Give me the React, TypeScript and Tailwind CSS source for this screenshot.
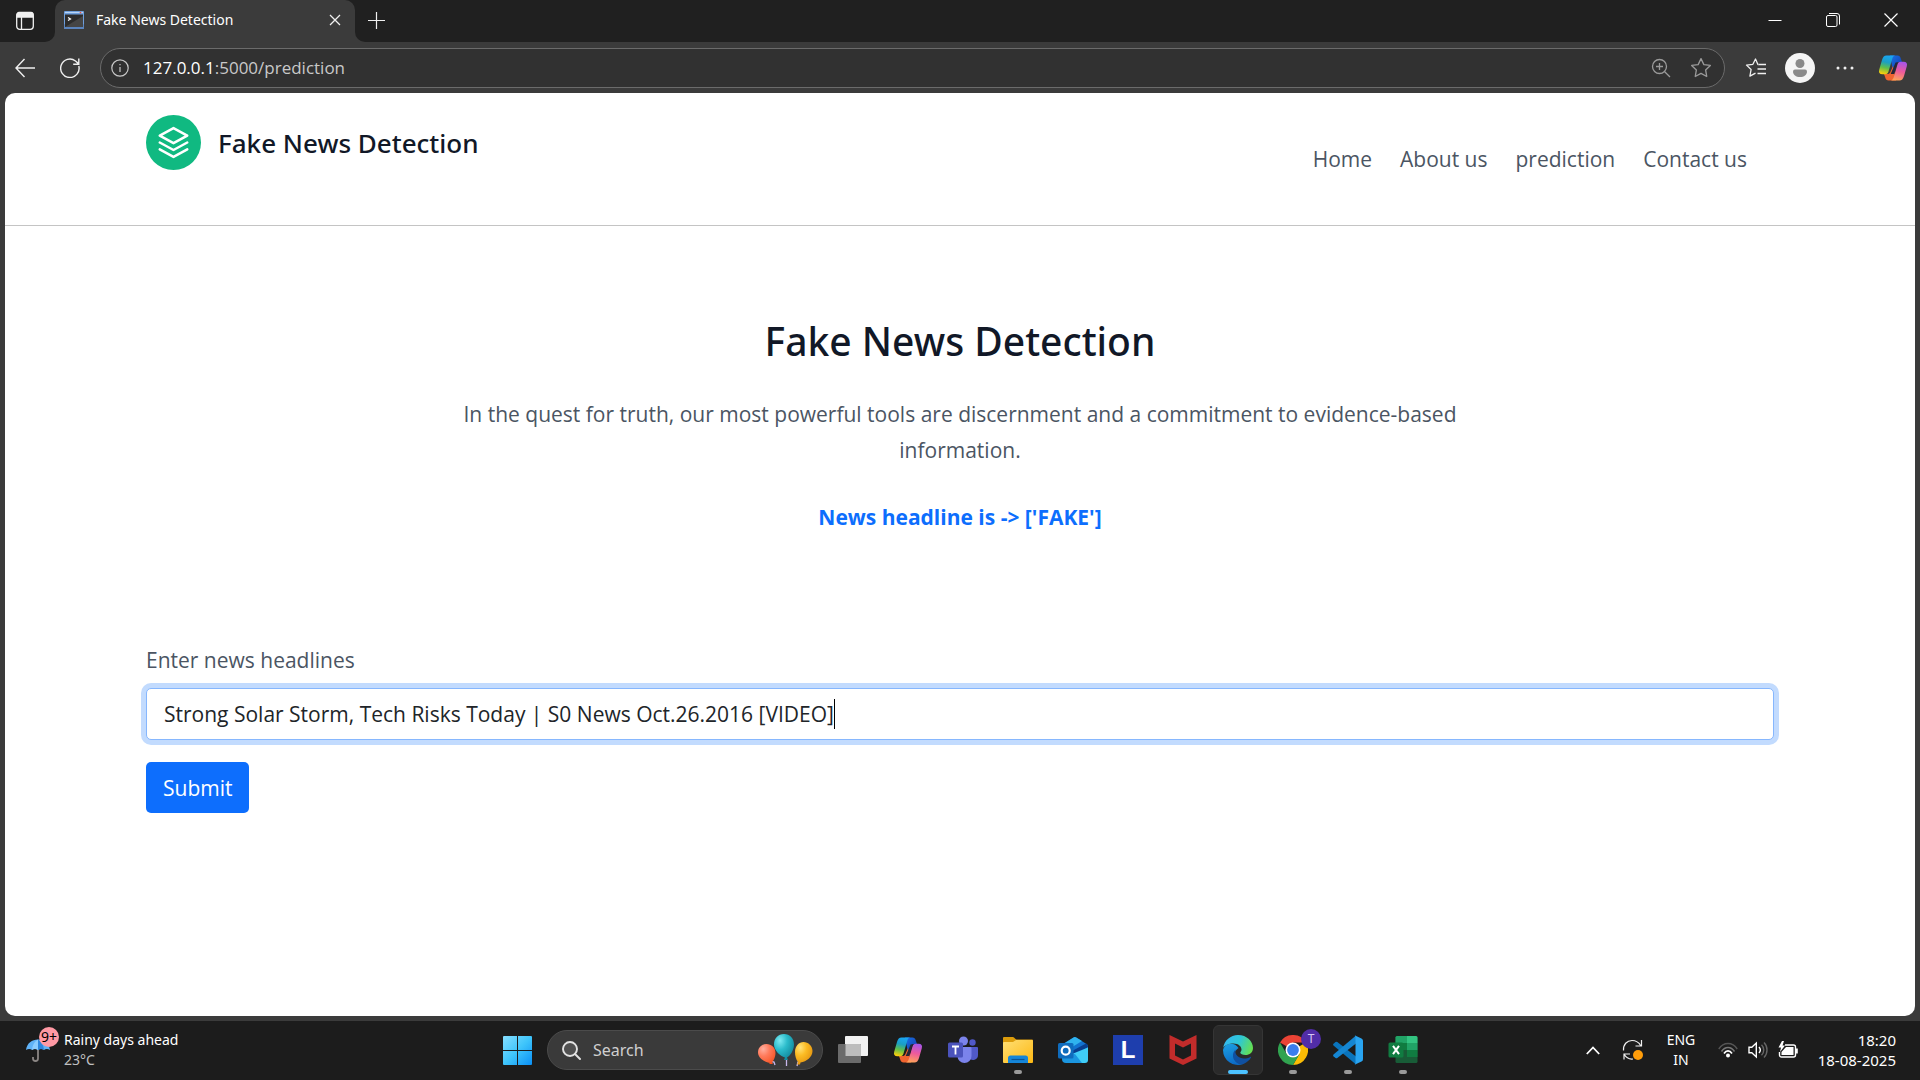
import type { ReactNode } from "react";

function CopilotIcon({ size }: { size: number }) {
  return (
    <svg width={size} height={size} viewBox="0 0 30 30" aria-hidden="true">
      <defs>
        <linearGradient id="cpLeft" x1="0.5" y1="0" x2="0.3" y2="1">
          <stop offset="0" stopColor="#1aa5f2" />
          <stop offset="0.35" stopColor="#1b9fc4" />
          <stop offset="0.65" stopColor="#5fbf4b" />
          <stop offset="1" stopColor="#ffce0a" />
        </linearGradient>
        <linearGradient id="cpRight" x1="0.6" y1="0" x2="0.4" y2="1">
          <stop offset="0" stopColor="#a855e8" />
          <stop offset="0.5" stopColor="#ee5a9c" />
          <stop offset="1" stopColor="#ffa25a" />
        </linearGradient>
        <linearGradient id="cpTop" x1="0" y1="0" x2="1" y2="1">
          <stop offset="0" stopColor="#1a73e8" />
          <stop offset="1" stopColor="#1238a8" />
        </linearGradient>
      </defs>
      <path d="M12 2.500h7.500c1.800 0 2.600 1 3.200 2.800L24 9h-3c-2 0-3 .8-3.600 2.600L15 17z" fill="url(#cpTop)" />
      <path d="M18 27.500h-7.500c-1.800 0-2.600-1-3.200-2.800L6 21h3c2 0 3-.8 3.600-2.600L15 13z" fill="#f0642f" />
      <path d="M8.500 2.500H17c-1.500.3-2.200 1.500-2.800 3.400L10.500 18.500c-.6 1.800-1.300 2.700-3.200 2.700H4.500C1.500 21.200.4 19.500 1.200 16.700L4 7C5 3.900 6.200 2.500 8.500 2.500z" fill="url(#cpLeft)" />
      <path d="M21.500 27.500H13c1.500-.3 2.200-1.500 2.800-3.400l3.700-12.600c.6-1.800 1.300-2.700 3.200-2.700h2.800c3 0 4.100 1.700 3.300 4.500L26 23C25 26.100 23.800 27.500 21.500 27.500z" fill="url(#cpRight)" />
      <path d="M17.600 9.500h2.600c-.6.600-1 1.400-1.300 2.400l-2.800 9h-3.400z" fill="#262638" />
    </svg>
  );
}

function TabActionsIcon() {
  return (
    <svg width="20" height="20" viewBox="0 0 20 20" fill="none" stroke="#f0f0f0" strokeWidth="1.300" aria-hidden="true">
      <rect x="1.700" y="1.700" width="16.600" height="16.600" rx="3" />
      <path d="M2 3.500a2 2 0 0 1 2-2h12a2 2 0 0 1 2 2V6H2z" fill="#f0f0f0" />
      <path d="M6.500 6v12" />
    </svg>
  );
}

function TerminalFavicon() {
  return (
    <svg width="20" height="18" viewBox="0 0 20 18" aria-hidden="true">
      <rect width="20" height="18" rx="1" fill="#6f9fdc" />
      <rect y="13" width="20" height="5" rx="1" fill="#5b84bd" />
      <path d="M1 1.500h18" stroke="#b7d4f5" />
      <circle cx="16.500" cy="1.600" r="0.900" fill="#e0544a" />
      <rect x="1" y="3.500" width="18" height="12.500" fill="#2c2c2c" />
      <path d="M1 16L19 5v11z" fill="#454545" />
      <path d="M4 6.500l2.500 1.500L4 9.500" stroke="#fff" strokeWidth="1.200" fill="none" />
    </svg>
  );
}

function StarPath() {
  return <path d="M10 1.500l2.600 5.400 5.900.8-4.300 4.100 1 5.900L10 14.900l-5.200 2.800 1-5.900L1.500 7.700l5.900-.8z" />;
}

function TitleBar() {
  return (
    <header className="flex h-[42px] shrink-0 bg-[#3b3b3b]">
      <button aria-label="Tab actions" className="flex w-[55px] items-center rounded-br-[10px] bg-[#202020] pl-[15px]">
        <TabActionsIcon />
      </button>
      <div className="w-[300px] bg-[#202020]">
        <div className="flex h-full items-center rounded-t-[10px] bg-[#3b3b3b] pr-[10px] pb-[2px] pl-[9px]">
          <TerminalFavicon />
          <span className="ml-3 flex-1 text-sm text-white">Fake News Detection</span>
          <button aria-label="Close tab" className="flex size-5 items-center justify-center">
            <svg width="12" height="12" viewBox="0 0 12 12" stroke="#f0f0f0" strokeWidth="1.300" aria-hidden="true">
              <path d="M1 1l10 10M11 1L1 11" />
            </svg>
          </button>
        </div>
      </div>
      <div className="flex flex-1 items-center rounded-bl-[10px] bg-[#202020] pb-[2px]">
        <button aria-label="New tab" className="ml-3">
          <svg width="19" height="19" viewBox="0 0 19 19" stroke="#f0f0f0" strokeWidth="1.200" aria-hidden="true">
            <path d="M9.500 1v17M1 9.500h17" />
          </svg>
        </button>
        <div className="ml-auto flex">
          <button aria-label="Minimize" className="flex w-[58px] justify-center">
            <svg width="14" height="14" viewBox="0 0 14 14" stroke="#fff" aria-hidden="true">
              <path d="M0.500 7.500h13" />
            </svg>
          </button>
          <button aria-label="Restore" className="flex w-[58px] justify-center">
            <svg width="14" height="14" viewBox="0 0 14 14" fill="none" stroke="#fff" aria-hidden="true">
              <rect x="0.500" y="2.500" width="10.500" height="11" rx="1.500" />
              <path d="M3 0.500h8a2.500 2.500 0 0 1 2.500 2.500v8.500" />
            </svg>
          </button>
          <button aria-label="Close" className="flex w-[58px] justify-center">
            <svg width="14" height="14" viewBox="0 0 14 14" stroke="#fff" strokeWidth="1.200" aria-hidden="true">
              <path d="M0.500 0.500l13 13M13.500 0.500l-13 13" />
            </svg>
          </button>
        </div>
      </div>
    </header>
  );
}

function Toolbar() {
  return (
    <div className="flex h-[51px] shrink-0 items-center pr-3 pl-[15px]">
      <button aria-label="Back">
        <svg width="20" height="20" viewBox="0 0 20 20" fill="none" stroke="#f0f0f0" strokeWidth="1.400" aria-hidden="true">
          <path d="M9.500 1L1 10l8.500 9M1 10h19" />
        </svg>
      </button>
      <button aria-label="Refresh" className="ml-[25px]">
        <svg width="20" height="20" viewBox="0 0 20 20" fill="none" stroke="#f0f0f0" strokeWidth="1.400" aria-hidden="true">
          <path d="M18.800 8A9.200 9.200 0 1 1 15.500 3l3 2.600M18.800 0.500v5.700h-5.600" />
        </svg>
      </button>
      <div className="ml-5 flex h-10 flex-1 items-center rounded-full border border-[#6b6b6b] bg-[#313131] pr-3 pl-[10px]">
        <svg width="18" height="18" viewBox="0 0 18 18" fill="none" stroke="#c8c8c8" strokeWidth="1.200" aria-hidden="true">
          <circle cx="9" cy="9" r="8.200" />
          <path d="M9 8v5M9 5v1.300" />
        </svg>
        <p className="ml-[14px] flex-1 font-['Open_Sans'] text-[17px] text-[#c9c9c9]">
          <span className="text-white">127.0.0.1</span>:5000/prediction
        </p>
        <button aria-label="Zoom">
          <svg width="20" height="20" viewBox="0 0 20 20" fill="none" stroke="#9a9a9a" strokeWidth="1.300" aria-hidden="true">
            <circle cx="8.500" cy="8.500" r="7" />
            <path d="M13.700 13.700l5.300 5.300M8.500 5v7M5 8.500h7" />
          </svg>
        </button>
        <button aria-label="Favorite this page" className="ml-[19px]">
          <svg width="22" height="22" viewBox="0 0 20 20" fill="none" stroke="#9a9a9a" strokeWidth="1.200" strokeLinejoin="round" aria-hidden="true">
            <StarPath />
          </svg>
        </button>
      </div>
      <button aria-label="Favorites" className="ml-5">
        <svg width="22" height="22" viewBox="0 0 22 22" fill="none" stroke="#f0f0f0" strokeWidth="1.300" strokeLinejoin="round" aria-hidden="true">
          <path d="M13.500 7.500h-.6L10.500 2 7.900 7.300 1.500 8.100l4.600 4.400-1.200 6.600 5.600-3" />
          <path d="M13.500 7.500H21M12.500 12H21M12.500 16.500H21" />
        </svg>
      </button>
      <button aria-label="Profile" className="ml-[18px]">
        <svg width="30" height="30" viewBox="0 0 30 30" aria-hidden="true">
          <circle cx="15" cy="15" r="15" fill="#f5f5f5" />
          <circle cx="15" cy="10.500" r="4.500" fill="#8a8a8a" />
          <path d="M10 16.500h10a2 2 0 0 1 2 2c0 3.500-3 5.500-7 5.500s-7-2-7-5.500a2 2 0 0 1 2-2z" fill="#8a8a8a" />
        </svg>
      </button>
      <button aria-label="Settings and more" className="ml-[21px]">
        <svg width="18" height="6" viewBox="0 0 18 6" fill="#f0f0f0" aria-hidden="true">
          <circle cx="2" cy="3" r="1.500" />
          <circle cx="9" cy="3" r="1.500" />
          <circle cx="16" cy="3" r="1.500" />
        </svg>
      </button>
      <button aria-label="Copilot" className="ml-6">
        <CopilotIcon size={30} />
      </button>
    </div>
  );
}

const links = ["Home", "About us", "prediction", "Contact us"];

function Page() {
  return (
    <main className="mx-[5px] mb-[5px] flex-1 overflow-hidden rounded-[10px] bg-white font-['Open_Sans',sans-serif] text-[21px] leading-9 text-[#4b5563]">
      <div className="flex h-[133px] border-b border-[#c4c4c4] px-[141px] pt-[22px]">
        <a href="#home" className="flex items-center gap-[17px] self-start">
          <svg width="55" height="55" viewBox="0 0 44 44" aria-hidden="true">
            <circle cx="22" cy="22" r="22" fill="#10b981" />
            <g transform="translate(10 10)" fill="none" stroke="#fff" strokeWidth="2" strokeLinecap="round" strokeLinejoin="round">
              <path d="M12 0.500L1 6.500l11 6 11-6zM1 17.500l11 6 11-6M1 12l11 6 11-6" />
            </g>
          </svg>
          <span className="font-['Noto_Sans'] text-[26px] font-medium text-[#111827]">Fake News Detection</span>
        </a>
        <nav className="mt-[26px] mr-[27px] ml-auto flex gap-7 self-start">
          {links.map((name) => (
            <a key={name} href={"#" + name.split(" ")[0].toLowerCase()}>
              {name}
            </a>
          ))}
        </nav>
      </div>
      <section className="mx-auto mt-[90px] w-full max-w-[1050px] text-center">
        <h1 className="font-['Noto_Sans'] text-[39px] leading-[50px] font-medium text-[#111827]">Fake News Detection</h1>
        <p className="mt-[30px]">
          In the quest for truth, our most powerful tools are discernment and a commitment to evidence-based
          information.
        </p>
        <p className="mt-[31px] font-bold text-[#0d6efd]">News headline is -&gt; ['FAKE']</p>
      </section>
      <form className="mt-[107px] px-[141px]" onSubmit={(e) => e.preventDefault()}>
        <label htmlFor="headline" className="block">
          Enter news headlines
        </label>
        <div className="mt-[10px] flex h-[52px] items-center rounded-[5px] border border-[#86b7fe] bg-white px-[17px] text-[#212529] ring-5 ring-[#c2dbfe]">
          <input
            id="headline"
            type="text"
            defaultValue="Strong Solar Storm, Tech Risks Today | S0 News Oct.26.2016 [VIDEO]"
            className="field-sizing-content outline-none"
          />
          <span className="h-[30px] w-px bg-black" />
        </div>
        <button type="submit" className="mt-[22px] flex h-[51px] items-center rounded-[5px] bg-[#0d6efd] px-[17px] text-white">
          Submit
        </button>
      </form>
    </main>
  );
}

function Balloons() {
  return (
    <svg width="56" height="34" viewBox="0 0 56 34" aria-hidden="true">
      <defs>
        <radialGradient id="bRed" cx="0.3" cy="0.25" r="0.9">
          <stop offset="0" stopColor="#ffb0a0" />
          <stop offset="0.4" stopColor="#ff7b5c" />
          <stop offset="1" stopColor="#f4501e" />
        </radialGradient>
        <radialGradient id="bTeal" cx="0.3" cy="0.25" r="0.9">
          <stop offset="0" stopColor="#7eeaf2" />
          <stop offset="0.4" stopColor="#2bbccb" />
          <stop offset="1" stopColor="#0c7c90" />
        </radialGradient>
        <radialGradient id="bGold" cx="0.3" cy="0.25" r="0.9">
          <stop offset="0" stopColor="#ffe37a" />
          <stop offset="0.4" stopColor="#fbbb23" />
          <stop offset="1" stopColor="#dd8a0c" />
        </radialGradient>
      </defs>
      <path d="M13 28l4 1 1 3M29.500 26v7M43 28l-2 1-1 4" stroke="#c9b8ec" strokeWidth="1.300" fill="none" />
      <path d="M9.500 11c5 0 9 3.500 9 9 0 5-3 9-3.500 9.500l1 1.500h-4l1-1C7 29 1 24.500 1 19.500 1 14.500 5 11 9.500 11z" fill="url(#bRed)" />
      <path d="M46.500 9c5 0 9 4 9 9 0 6-6 10.500-12 11.500l-.5 2h-3l1-2.500c-2-2.500-3-6-3-10 0-6 4-10 8.500-10z" fill="url(#bGold)" />
      <path d="M27 1c6 0 10 4.500 10 10.500 0 6-4 11.500-7 13l1 2.500h-4l1-2.500c-5-1.500-11-7-11-13C17 5.500 21 1 27 1z" fill="url(#bTeal)" />
    </svg>
  );
}

const svg30 = { width: 30, height: 30, viewBox: "0 0 30 30", "aria-hidden": true } as const;

function TaskViewIcon() {
  return (
    <svg {...svg30}>
      <rect x="7" y="1" width="23" height="20" rx="1" fill="#f2f2f2" />
      <rect x="0" y="9" width="23" height="19" rx="1" fill="#6b6b6b" />
      <path d="M7.500 9H22a1 1 0 0 1 1 1v11H7.500z" fill="#bdbdbd" />
    </svg>
  );
}

function TeamsIcon() {
  return (
    <svg {...svg30}>
      <circle cx="24.500" cy="7.500" r="3.200" fill="#5059c9" />
      <path d="M21 12h8a1 1 0 0 1 1 1v7a5 5 0 0 1-9 3z" fill="#5059c9" />
      <circle cx="15.500" cy="6" r="4.500" fill="#7b83eb" />
      <path d="M10 12h12.500a1 1 0 0 1 1 1v8a7 7 0 0 1-14 0z" fill="#7b83eb" />
      <rect x="0" y="7.500" width="15" height="15" rx="1.500" fill="#4b53bc" />
      <path d="M4 11.500h7M7.500 11.500v8" stroke="#fff" strokeWidth="1.800" />
    </svg>
  );
}

function ExplorerIcon() {
  return (
    <svg {...svg30}>
      <defs>
        <linearGradient id="folder" x1="0" y1="0" x2="1" y2="1">
          <stop offset="0" stopColor="#ffdf74" />
          <stop offset="1" stopColor="#fdb813" />
        </linearGradient>
      </defs>
      <path d="M0 3a1 1 0 0 1 1-1h9c1.500 0 2 2.500 3.500 2.500H29a1 1 0 0 1 1 1V10H0z" fill="#dc9c0b" />
      <path d="M0 8a1 1 0 0 1 1-1h9l3-2h16.500l.5 1v21a1 1 0 0 1-1 1H1a1 1 0 0 1-1-1z" fill="url(#folder)" />
      <path d="M5 28v-5a2.500 2.500 0 0 1 2.500-2.500h15A2.500 2.500 0 0 1 25 23v5z" fill="#1585d8" />
      <path d="M8.500 24.500h13" stroke="#0b5394" strokeWidth="1.200" />
    </svg>
  );
}

function OutlookIcon() {
  return (
    <svg {...svg30}>
      <path d="M4 9.500L15.500 2.500a2.500 2.500 0 0 1 2.700 0L28.500 9a3 3 0 0 1 1.500 2.500V18L12 27 4 20z" fill="#1272cf" />
      <path d="M7 8l8.500-5.500a2.500 2.500 0 0 1 2.700 0L24 6 11 14z" fill="#2fb3ee" />
      <path d="M14 16L28 8.500c1.200.8 2 1.500 2 3.500L16 21z" fill="#083f8f" />
      <path d="M30 12.500V25a3 3 0 0 1-3 3H9l5-9z" fill="#3fcdf7" />
      <path d="M4 20l13-1 7 9H8a4 4 0 0 1-4-4z" fill="#1b96e0" />
      <rect x="0" y="8" width="15.500" height="15.500" rx="1.500" fill="#0f6cbd" />
      <circle cx="7.700" cy="15.700" r="4" fill="none" stroke="#fff" strokeWidth="2.200" />
    </svg>
  );
}

function LIcon() {
  return (
    <span className="flex size-[30px] items-center justify-center bg-[#1e3ead] font-['Liberation_Sans'] text-2xl font-bold text-white">
      L
    </span>
  );
}

function McAfeeIcon() {
  return (
    <svg {...svg30}>
      <path d="M1.500 0L15 6.500 28.500 0v23.500L15 30 1.500 23.500zM7 8.500v12l8 4 8-4v-12l-8 4z" fill="#c22c2b" fillRule="evenodd" />
    </svg>
  );
}

function EdgeIcon() {
  return (
    <svg {...svg30}>
      <defs>
        <linearGradient id="eTop" x1="0" y1="0.3" x2="1" y2="0.6">
          <stop offset="0" stopColor="#35b8f1" />
          <stop offset="0.5" stopColor="#2ec7d6" />
          <stop offset="1" stopColor="#66e04e" />
        </linearGradient>
        <linearGradient id="eLeft" x1="0.3" y1="0" x2="0.6" y2="1">
          <stop offset="0" stopColor="#1b9de2" />
          <stop offset="1" stopColor="#0b68c4" />
        </linearGradient>
      </defs>
      <path d="M0 15a15 15 0 0 0 20 14.100c-7 0-9-5-9-8.100 0-4 2-6 4.500-8C12 7 2 7 0 15z" fill="url(#eLeft)" />
      <path d="M0.200 13C1.200 5.500 7.500 0 15 0c9 0 15 6.500 15 13 0 4.500-3.500 7-7.500 7-3 0-5.200-1-5.200-2.200 0-.8 1.200-1.300 1.200-3.300 0-3-3-6-8-6-5 0-9 2-10.300 4.500z" fill="url(#eTop)" />
      <path d="M12.500 14.500c-3 3-3.500 8-.5 11.500 2.500 3.200 6.500 3.800 9 2.700 3-1.200 5.500-3.600 7-6.200.3-.6-.2-.9-.7-.6-7 3.600-16.300.6-14.800-7.400z" fill="#1050a0" />
    </svg>
  );
}

function ChromeIcon() {
  return (
    <svg {...svg30}>
      <path d="M15 15L2 7.500A15 15 0 0 1 28 7.500H15z" fill="#ea4335" />
      <path d="M15 15L28 7.500A15 15 0 0 1 15 30l6.500-11.200z" fill="#fbbc05" />
      <path d="M2 7.500l6.500 11.200L15 22.500 21.500 19 15 30A15 15 0 0 1 2 7.500z" fill="#31a350" />
      <circle cx="15" cy="15" r="7.500" fill="#fff" />
      <circle cx="15" cy="15" r="5.900" fill="#3b7ded" />
    </svg>
  );
}

function CodeIcon() {
  return (
    <svg {...svg30}>
      <path d="M0.500 8.800l2-1.700a1.500 1.500 0 0 1 1.800 0L23 21.500v8L0.500 10.500a1.200 1.200 0 0 1 0-1.700z" fill="#0a74bc" />
      <path d="M0.500 21.200l2 1.700a1.500 1.500 0 0 0 1.800 0L23 8.500v-8L0.500 19.500a1.200 1.200 0 0 0 0 1.700z" fill="#1586d2" />
      <path d="M21.500 0.200L28.500 3.500a2.500 2.500 0 0 1 1.500 2.300v18.400a2.500 2.500 0 0 1-1.500 2.300l-7 3.300c.6-.3 1-1 1-1.800V2c0-.8-.4-1.500-1-1.800z" fill="#29a4f0" />
    </svg>
  );
}

function ExcelIcon() {
  return (
    <svg {...svg30}>
      <rect x="7.500" y="1" width="22" height="27" rx="1.500" fill="#185c37" />
      <path d="M7.500 2.500A1.500 1.500 0 0 1 9 1h10v7H7.500z" fill="#21a366" />
      <path d="M19 1h9a1.500 1.500 0 0 1 1.500 1.500V8H19z" fill="#33c481" />
      <path d="M7.500 8H19v7H7.500zM19 15h10.500v7H19z" fill="#107c41" />
      <path d="M19 8h10.500v7H19z" fill="#21a366" />
      <rect x="0.500" y="7.500" width="15" height="15" rx="1.500" fill="#107c41" />
      <path d="M5 10.800l6 8.400M11 10.800l-6 8.400" stroke="#fff" strokeWidth="2" />
    </svg>
  );
}

type App = { name: string; icon: ReactNode; open?: boolean; active?: boolean; badge?: string };

const apps: App[] = [
  { name: "Task view", icon: <TaskViewIcon /> },
  { name: "Copilot", icon: <CopilotIcon size={30} /> },
  { name: "Teams", icon: <TeamsIcon /> },
  { name: "File Explorer", icon: <ExplorerIcon />, open: true },
  { name: "Outlook", icon: <OutlookIcon /> },
  { name: "Laptop assistant", icon: <LIcon /> },
  { name: "McAfee", icon: <McAfeeIcon /> },
  { name: "Edge", icon: <EdgeIcon />, active: true },
  { name: "Chrome", icon: <ChromeIcon />, open: true, badge: "T" },
  { name: "Visual Studio Code", icon: <CodeIcon />, open: true },
  { name: "Excel", icon: <ExcelIcon />, open: true },
];

function AppButton({ app }: { app: App }) {
  return (
    <button
      aria-label={app.name}
      className={
        "relative flex size-[50px] items-center justify-center rounded-md border " +
        (app.active ? "border-[#353535] bg-[#2a2a2a]" : "border-transparent")
      }
    >
      {app.icon}
      {app.badge && (
        <span className="absolute top-[3px] -right-1 flex size-5 items-center justify-center rounded-full bg-[#512da8] text-xs text-[#d6c8f5]">
          {app.badge}
        </span>
      )}
      {app.active && <span className="absolute bottom-0 h-1 w-5 rounded-full bg-[#4cc2ff]" />}
      {app.open && <span className="absolute bottom-0 h-1 w-2 rounded-full bg-[#9a9a9a]" />}
    </button>
  );
}

function Taskbar() {
  return (
    <footer className="grid h-[59px] shrink-0 grid-cols-[1fr_auto_1fr] items-center bg-[#1c1c1c] pb-px text-sm leading-5 text-white">
      <button className="flex items-center pl-[26px] text-left">
        <span className="relative mr-[14px]">
          <svg width="24" height="24" viewBox="0 0 24 24" aria-hidden="true">
            <path d="M12 10v10.500a2.500 2.500 0 0 1-5 0V19" fill="none" stroke="#8a8583" strokeWidth="1.800" />
            <path d="M0 12C1 5 6 1.500 12 1.500S23 5 24 12c-2-1.500-4.500-1.500-6 0-1.800-1.500-4.200-1.500-6 0-1.800-1.500-4.200-1.500-6 0-1.500-1.500-4-1.500-6 0z" fill="#5fb2f7" />
            <path d="M12 1.500c4 2.500 5.500 6 6 10.500-1.800-1.500-4.200-1.500-6 0z" fill="#2d86dd" />
            <path d="M12 1.500C8 4 6.500 7.500 6 12c1.800-1.500 4.200-1.500 6 0z" fill="#8accff" />
          </svg>
          <span className="absolute -top-[11px] left-[13px] flex size-5 items-center justify-center rounded-full bg-[#ff99a4] text-sm text-black">
            9+
          </span>
        </span>
        <span>
          <span className="block">Rainy days ahead</span>
          <span className="block text-[#c0c0c0]">23°C</span>
        </span>
      </button>
      <div className="flex items-center gap-[5px]">
        <button aria-label="Start" className="flex size-[50px] items-center justify-center">
          <svg width="29" height="29" viewBox="0 0 29 29" aria-hidden="true">
            <defs>
              <linearGradient id="win" x1="0" y1="0" x2="29" y2="29" gradientUnits="userSpaceOnUse">
                <stop offset="0" stopColor="#86deff" />
                <stop offset="0.5" stopColor="#3fc5fb" />
                <stop offset="1" stopColor="#0a8ff5" />
              </linearGradient>
            </defs>
            <path d="M0 1a1 1 0 0 1 1-1h13v14H0zM15 0h13a1 1 0 0 1 1 1v13H15zM0 15h14v14H1a1 1 0 0 1-1-1zM15 15h14v13a1 1 0 0 1-1 1H15z" fill="url(#win)" />
          </svg>
        </button>
        <label className="flex h-10 w-[276px] items-center rounded-full border border-[#4b4b4b] bg-[#3a3a3a] pr-[9px] pl-[14px]">
          <svg width="19" height="19" viewBox="0 0 19 19" fill="none" stroke="#e2e2e2" strokeWidth="1.900" strokeLinecap="round" aria-hidden="true">
            <circle cx="8" cy="8" r="7" fill="#505050" />
            <path d="M13 13l5 5" />
          </svg>
          <input
            type="search"
            aria-label="Search"
            placeholder="Search"
            className="ml-3 w-0 flex-1 text-base outline-none placeholder:text-[#cfcfcf]"
          />
          <Balloons />
        </label>
        {apps.map((app) => (
          <AppButton key={app.name} app={app} />
        ))}
      </div>
      <div className="flex items-center justify-end pr-6">
        <button aria-label="Show hidden icons">
          <svg width="14" height="9" viewBox="0 0 14 9" fill="none" stroke="#fff" strokeWidth="1.800" aria-hidden="true">
            <path d="M0.800 8L7 1.500 13.200 8" />
          </svg>
        </button>
        <button aria-label="Update available" className="ml-[22px]">
          <svg width="22" height="22" viewBox="0 0 22 22" fill="none" stroke="#f0f0f0" strokeWidth="1.200" aria-hidden="true">
            <path d="M1.500 11.500C1 5.500 5 1.500 10 1.500c4 0 7 2 8.800 5.200M19.500 1v6h-6M2 20.500v-5.500h6M2 15c2 3.500 5 5.500 9 5" />
            <circle cx="16" cy="16" r="5" fill="#ff9d0a" stroke="none" />
          </svg>
        </button>
        <button className="ml-[22px] w-[30px] text-center">
          ENG
          <br />
          IN
        </button>
        <button aria-label="Network, volume and battery" className="ml-[22px] flex items-center gap-[10px]">
          <svg width="20" height="16" viewBox="0 0 20 16" fill="none" strokeWidth="1.500" aria-hidden="true">
            <path d="M0.800 7C5.500-0.200 14.500-0.200 19.200 7" stroke="#555" />
            <path d="M3.500 9.500C7 4 13 4 16.500 9.500" stroke="#777" />
            <path d="M6 11.500c2.300-3.400 5.700-3.400 8 0" stroke="#fff" strokeWidth="1.700" />
            <circle cx="10" cy="13.500" r="2" fill="#fff" />
          </svg>
          <svg width="20" height="18" viewBox="0 0 20 18" fill="none" stroke="#fff" strokeWidth="1.400" aria-hidden="true">
            <path d="M1 6.200h2.800L8.300 2v14l-4.500-4.200H1zM11 6c1.500 1.700 1.500 4.300 0 6" />
            <path d="M13.500 3.800c3 2.900 3 7.500 0 10.400M16 1.500c4 4 4 11 0 15" stroke="#666" />
          </svg>
          <svg width="20" height="18" viewBox="0 0 20 18" fill="none" stroke="#fff" strokeWidth="1.400" aria-hidden="true">
            <path d="M7 4h8.500A2 2 0 0 1 17.500 6v8a2 2 0 0 1-2 2H3.500a2 2 0 0 1-2-2v-3" />
            <path d="M8 6h7.500v8h-12v-3z" fill="#fff" stroke="none" />
            <path d="M18.800 7.500v5" strokeWidth="2" />
            <path d="M4 0L0.500 6.500H3L2 11l5-6.500H4.500L6 0z" fill="#fff" stroke="none" />
          </svg>
        </button>
        <button className="ml-[18px] w-20 text-right text-[15px] whitespace-nowrap">
          18:20
          <br />
          18-08-2025
        </button>
      </div>
    </footer>
  );
}

export default function App() {
  return (
    <div className="flex min-h-screen flex-col bg-[#3b3b3b] font-['Noto_Sans',sans-serif]">
      <TitleBar />
      <Toolbar />
      <Page />
      <Taskbar />
    </div>
  );
}
